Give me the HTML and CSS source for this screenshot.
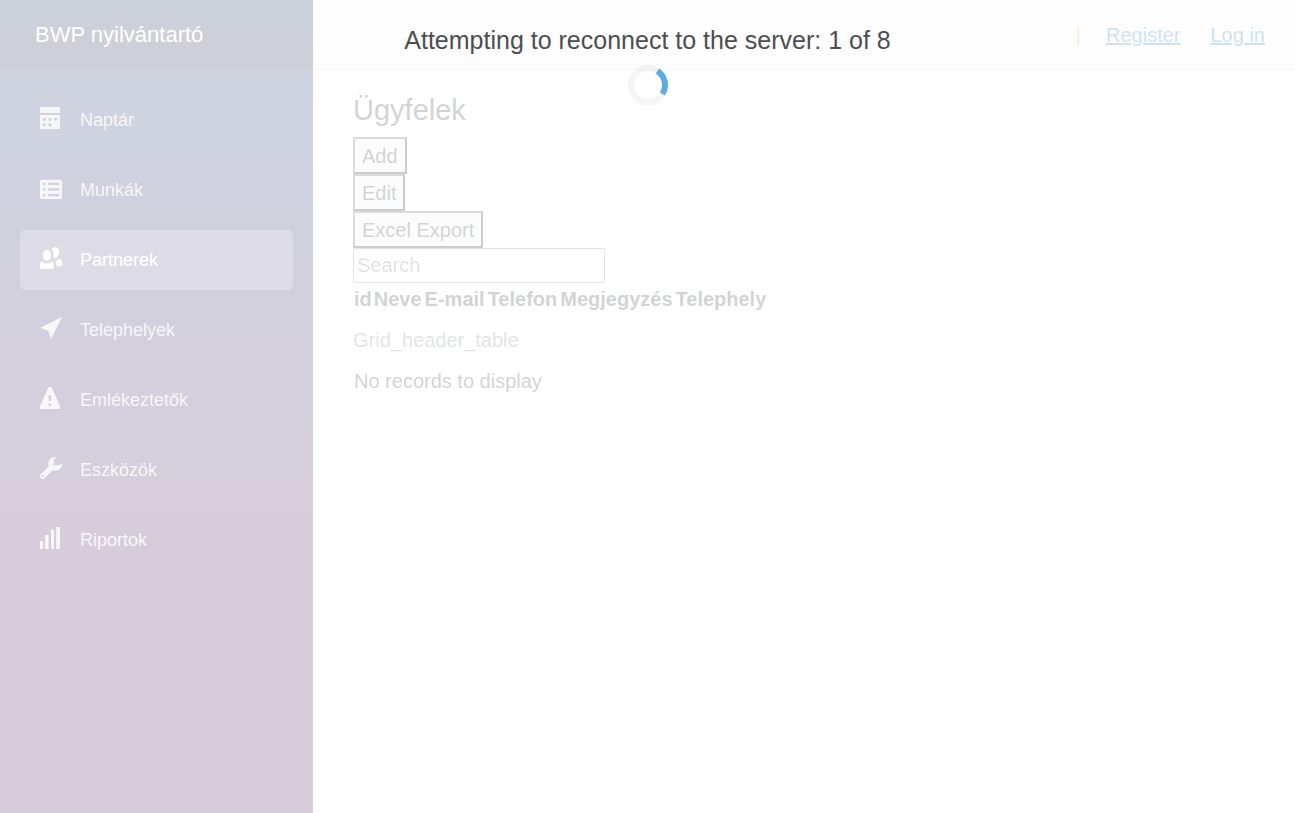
FILE: index.html
```html
<!DOCTYPE html>
<html lang="hu">
<head>
<meta charset="utf-8">
<meta name="viewport" content="width=device-width, initial-scale=1">
<title>BWP nyilvántartó</title>
<link rel="stylesheet" href="styles.css">
</head>
<body>
<div class="page">
  <aside class="sidebar">
    <div class="brand-row"><a class="brand" href="#">BWP nyilvántartó</a></div>
    <nav>
      <ul class="nav">
        <li><a class="nav-link" href="#"><svg class="icon" viewBox="0 0 8 8" aria-hidden="true"><path d="M0 0v2.18h7.25v-2.18h-7.25zm0 2.9v5.1h7.25v-5.1h-7.25zm1.1 1.1h1v1h-1v-1zm2 0h1v1h-1v-1zm2.1 0h1v1h-1v-1zm-4.1 2h1v1h-1v-1zm2 0h1v1h-1v-1z"/></svg>Naptár</a></li>
        <li><a class="nav-link" href="#"><svg class="icon" viewBox="0 -1 8 8" aria-hidden="true"><path d="M.6 0c-.33 0-.6.27-.6.6v5.9c0 .33.27.6.6.6h6.8c.33 0 .6-.27.6-.6v-5.9c0-.33-.27-.6-.6-.6h-6.8zm.5 1.1h.9v.8h-.9v-.8zm1.9 0h4v.8h-4v-.8zm-1.9 2h.9v.9h-.9v-.9zm1.9 0h4v.9h-4v-.9zm-1.9 2.1h.9v.8h-.9v-.8zm1.9 0h4v.8h-4v-.8z"/></svg>Munkák</a></li>
        <li><a class="nav-link active" href="#" aria-current="page"><svg class="icon" viewBox="0 0 8 8" aria-hidden="true"><path d="M5.5 0c-.51 0-.95.35-1.22.88.45.54.72 1.28.72 2.13 0 .29-.03.55-.09.81.19.11.38.19.59.19.83 0 1.5-.9 1.5-2s-.67-2-1.5-2zm-3 1c-.83 0-1.5.9-1.5 2s.67 2 1.5 2 1.5-.9 1.5-2-.67-2-1.5-2zm4.75 3.16c-.43.51-1.02.82-1.69.84.27.38.44.84.44 1.34v.66h2v-1.66c0-.52-.31-.97-.75-1.19zm-6.5 1c-.44.22-.75.67-.75 1.19v1.66h5v-1.66c0-.52-.31-.97-.75-1.19-.45.53-1.06.84-1.75.84s-1.3-.32-1.75-.84z"/></svg>Partnerek</a></li>
        <li><a class="nav-link" href="#"><svg class="icon" viewBox="0 0 8 8" aria-hidden="true"><path d="M8 0l-8 4 3 1 1 3 4-8z"/></svg>Telephelyek</a></li>
        <li><a class="nav-link" href="#"><svg class="icon" viewBox="0 0 8 8" aria-hidden="true"><path d="M3.2 0c-.06 0-.1.04-.13.09l-3.04 6.81c-.02.05-.03.13-.03.19v.81c0 .05.04.09.09.09h7.1c.05 0 .09-.04.09-.09v-.81c0-.05-.01-.14-.03-.19l-3.04-6.81c-.02-.05-.07-.09-.13-.09h-.88zm-.1 3h1v2h-1v-2zm0 3.1h1v.8h-1v-.8z"/></svg>Emlékeztetők</a></li>
        <li><a class="nav-link" href="#"><svg class="icon" viewBox="0 0 8 8" aria-hidden="true"><path d="M5.5 0c-1.38 0-2.5 1.12-2.5 2.5 0 .32.08.62.19.91l-2.91 2.88c-.39.39-.39 1.05 0 1.44.2.2.46.28.72.28.26 0 .52-.09.72-.28l2.88-2.91c.28.11.58.19.91.19 1.38 0 2.5-1.12 2.5-2.5 0-.16 0-.32-.03-.47l-.97.97h-2v-2l.97-.97c-.15-.03-.31-.03-.47-.03zm-4.5 6.6c.22 0 .4.18.4.4s-.18.4-.4.4-.4-.18-.4-.4.18-.4.4-.4z"/></svg>Eszközök</a></li>
        <li><a class="nav-link" href="#"><svg class="icon" viewBox="0 0 8 8" aria-hidden="true"><path d="M5.9 0v8h1.35v-8zM4 1v7h1.1v-7zM1.85 2.9v5.1h1.3v-5.1zM0 5.1v2.9h1.1v-2.9z"/></svg>Riportok</a></li>
      </ul>
    </nav>
  </aside>
  <div class="main">
    <header class="top-row">
      <span class="divider">|</span>
      <a class="account" href="#">Register</a>
      <a class="account" href="#">Log in</a>
    </header>
    <main class="content">
      <h1 class="title">Ügyfelek</h1>
      <div class="toolbar">
        <button class="tool" type="button">Add</button>
        <button class="tool" type="button">Edit</button>
        <button class="tool" type="button">Excel Export</button>
        <input class="search" type="text" placeholder="Search" aria-label="Search">
      </div>
      <table class="grid">
        <caption>Grid_header_table</caption>
        <thead><tr><th>id</th><th>Neve</th><th>E-mail</th><th>Telefon</th><th>Megjegyzés</th><th>Telephely</th></tr></thead>
      </table>
      <table class="grid">
        <tbody><tr><td>No records to display</td></tr></tbody>
      </table>
    </main>
  </div>
</div>
<div class="reconnect" role="alert">
  <p class="message">Attempting to reconnect to the server: 1 of 8</p>
  <svg class="spinner" viewBox="-20 -20 40 40" aria-hidden="true"><circle class="track" r="17"/><path class="arc" d="M9.5 -14.1A17 17 0 0 1 14.4 9"/></svg>
</div>
</body>
</html>
```
FILE: styles.css
```css
* { box-sizing: border-box; }

body {
  margin: 0;
  background: #fff;
  color: #212529;
  font: 20px/30px "Liberation Sans", Arial, sans-serif;
}

.page { display: flex; min-height: 100vh; }

.sidebar {
  flex: 0 0 313px;
  background: linear-gradient(180deg, #052767 0%, #3a0647 70%);
}

.brand-row {
  display: flex;
  align-items: center;
  height: 70px;
  padding: 0 35px;
  background: rgba(0, 0, 0, .4);
}

.brand { color: #fff; font-size: 22px; text-decoration: none; }

.nav {
  display: flex;
  flex-direction: column;
  gap: 10px;
  margin: 0;
  padding: 20px;
  list-style: none;
}

.nav-link {
  display: flex;
  align-items: center;
  gap: 18px;
  height: 60px;
  padding: 0 20px;
  border-radius: 5px;
  color: #d7d7d7;
  font-size: 18px;
  text-decoration: none;
}

.nav-link.active { background: rgba(255, 255, 255, .25); color: #fff; }

.icon { width: 22px; height: 22px; margin-bottom: 4px; fill: currentColor; }

.main { flex: 1; min-width: 0; }

.top-row {
  display: flex;
  align-items: center;
  justify-content: flex-end;
  height: 70px;
  padding: 0 30px;
  border-bottom: 1px solid #d6d5d5;
  background: #f3f3f3;
}

.divider { margin-right: 25px; color: #fa9632; }

.account { color: #0071c1; text-decoration: underline; }
.account + .account { margin-left: 30px; }

.content { padding: 23px 40px; }

.title { margin: 0 0 10px; font-size: 29px; font-weight: 400; line-height: 34px; }

.toolbar { display: flex; flex-direction: column; align-items: flex-start; }

.tool {
  padding: 2px 7px 1px;
  border: 2px solid;
  border-color: #4c4c4c #000 #000 #4c4c4c;
  background: #efefef;
  color: #212529;
  font: inherit;
}

.search {
  width: 252px;
  height: 35px;
  max-width: 100%;
  padding: 1px 3px;
  border: 1px solid #767676;
  border-radius: 2px;
  background: #fff;
  font: inherit;
}

.search::placeholder { color: #757575; opacity: 1; }

.grid { border-collapse: collapse; }
.grid th, .grid td { padding: 1px; text-align: left; }
.grid th + th { padding-right: 2px; }
.grid caption {
  caption-side: bottom;
  padding: 10px 0;
  color: #6c757d;
  text-align: left;
}

.reconnect {
  position: fixed;
  inset: 0;
  display: flex;
  flex-direction: column;
  align-items: center;
  background: #fff;
  opacity: .8;
}

.message { margin: 25px 0 10px; font-size: 25px; }

.spinner { width: 40px; height: 40px; fill: none; stroke-width: 6; }
.track { stroke: #f3f3f3; }
.arc { stroke: #3498db; }
```
